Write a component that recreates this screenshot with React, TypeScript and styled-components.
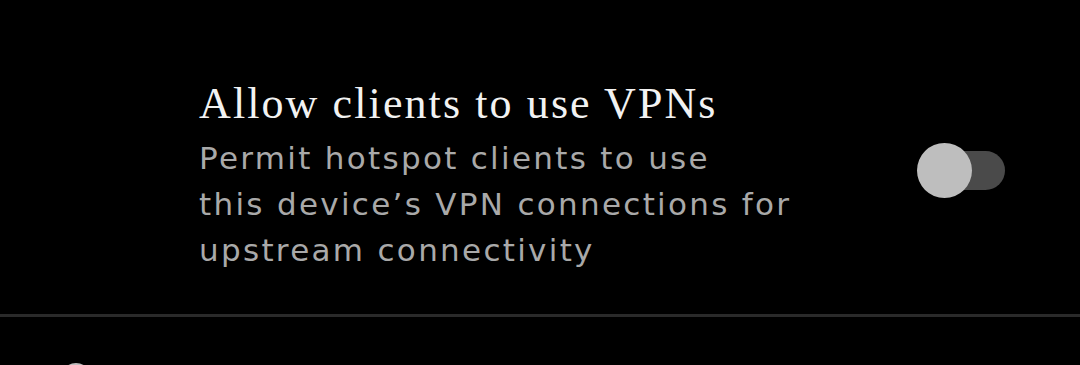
import React from "react";
import styled, { createGlobalStyle } from "styled-components";

const Global = createGlobalStyle`
  html, body { margin: 0; padding: 0; background: #000; }
  body { width: 1080px; height: 365px; overflow: hidden; }
`;

const Page = styled.div`
  width: 1080px;
  height: 365px;
  background: #000;
  display: flex;
  flex-direction: column;
  overflow: hidden;
`;

const Row = styled.div`
  flex-shrink: 0;
  height: 314px;
  display: flex;
  align-items: flex-start;
  padding: 78px 75px 0 199px;
  box-sizing: border-box;
`;

const TextCol = styled.div`
  flex: 1;
  display: flex;
  flex-direction: column;
`;

const Title = styled.div`
  font-family: "Liberation Serif", "DejaVu Serif", serif;
  font-size: 44px;
  line-height: 52px;
  color: #f2f2f2;
  letter-spacing: 2.1px;
  white-space: nowrap;
`;

const Summary = styled.div`
  margin-top: 5px;
  font-family: "DejaVu Sans", "Noto Sans", sans-serif;
  font-size: 31px;
  line-height: 46px;
  color: #a9a9a9;
  letter-spacing: 2.3px;
  white-space: nowrap;
`;

const Track = styled.div`
  position: relative;
  flex-shrink: 0;
  width: 80px;
  height: 39px;
  border-radius: 20px;
  background: #4a4a4a;
  margin-top: 73px;
`;

const Thumb = styled.div`
  position: absolute;
  left: -8px;
  top: -8px;
  width: 55px;
  height: 55px;
  border-radius: 50%;
  background: #bebebe;
`;

const Divider = styled.div`
  flex-shrink: 0;
  height: 3px;
  background: #2a2a2a;
`;

const NextRow = styled.div`
  flex: 1;
  padding-left: 61px;
  padding-top: 46px;
`;

const NextIcon = styled.div`
  width: 24px;
  height: 24px;
  border-radius: 50%;
  border: 3px solid #bdbdbd;
`;

export default function App() {
  return (
    <Page>
      <Global />
      <Row>
        <TextCol>
          <Title>Allow clients to use VPNs</Title>
          <Summary>
            Permit hotspot clients to use
            <br />
            this device’s VPN connections for
            <br />
            upstream connectivity
          </Summary>
        </TextCol>
        <Track>
          <Thumb />
        </Track>
      </Row>
      <Divider />
      <NextRow>
        <NextIcon />
      </NextRow>
    </Page>
  );
}
